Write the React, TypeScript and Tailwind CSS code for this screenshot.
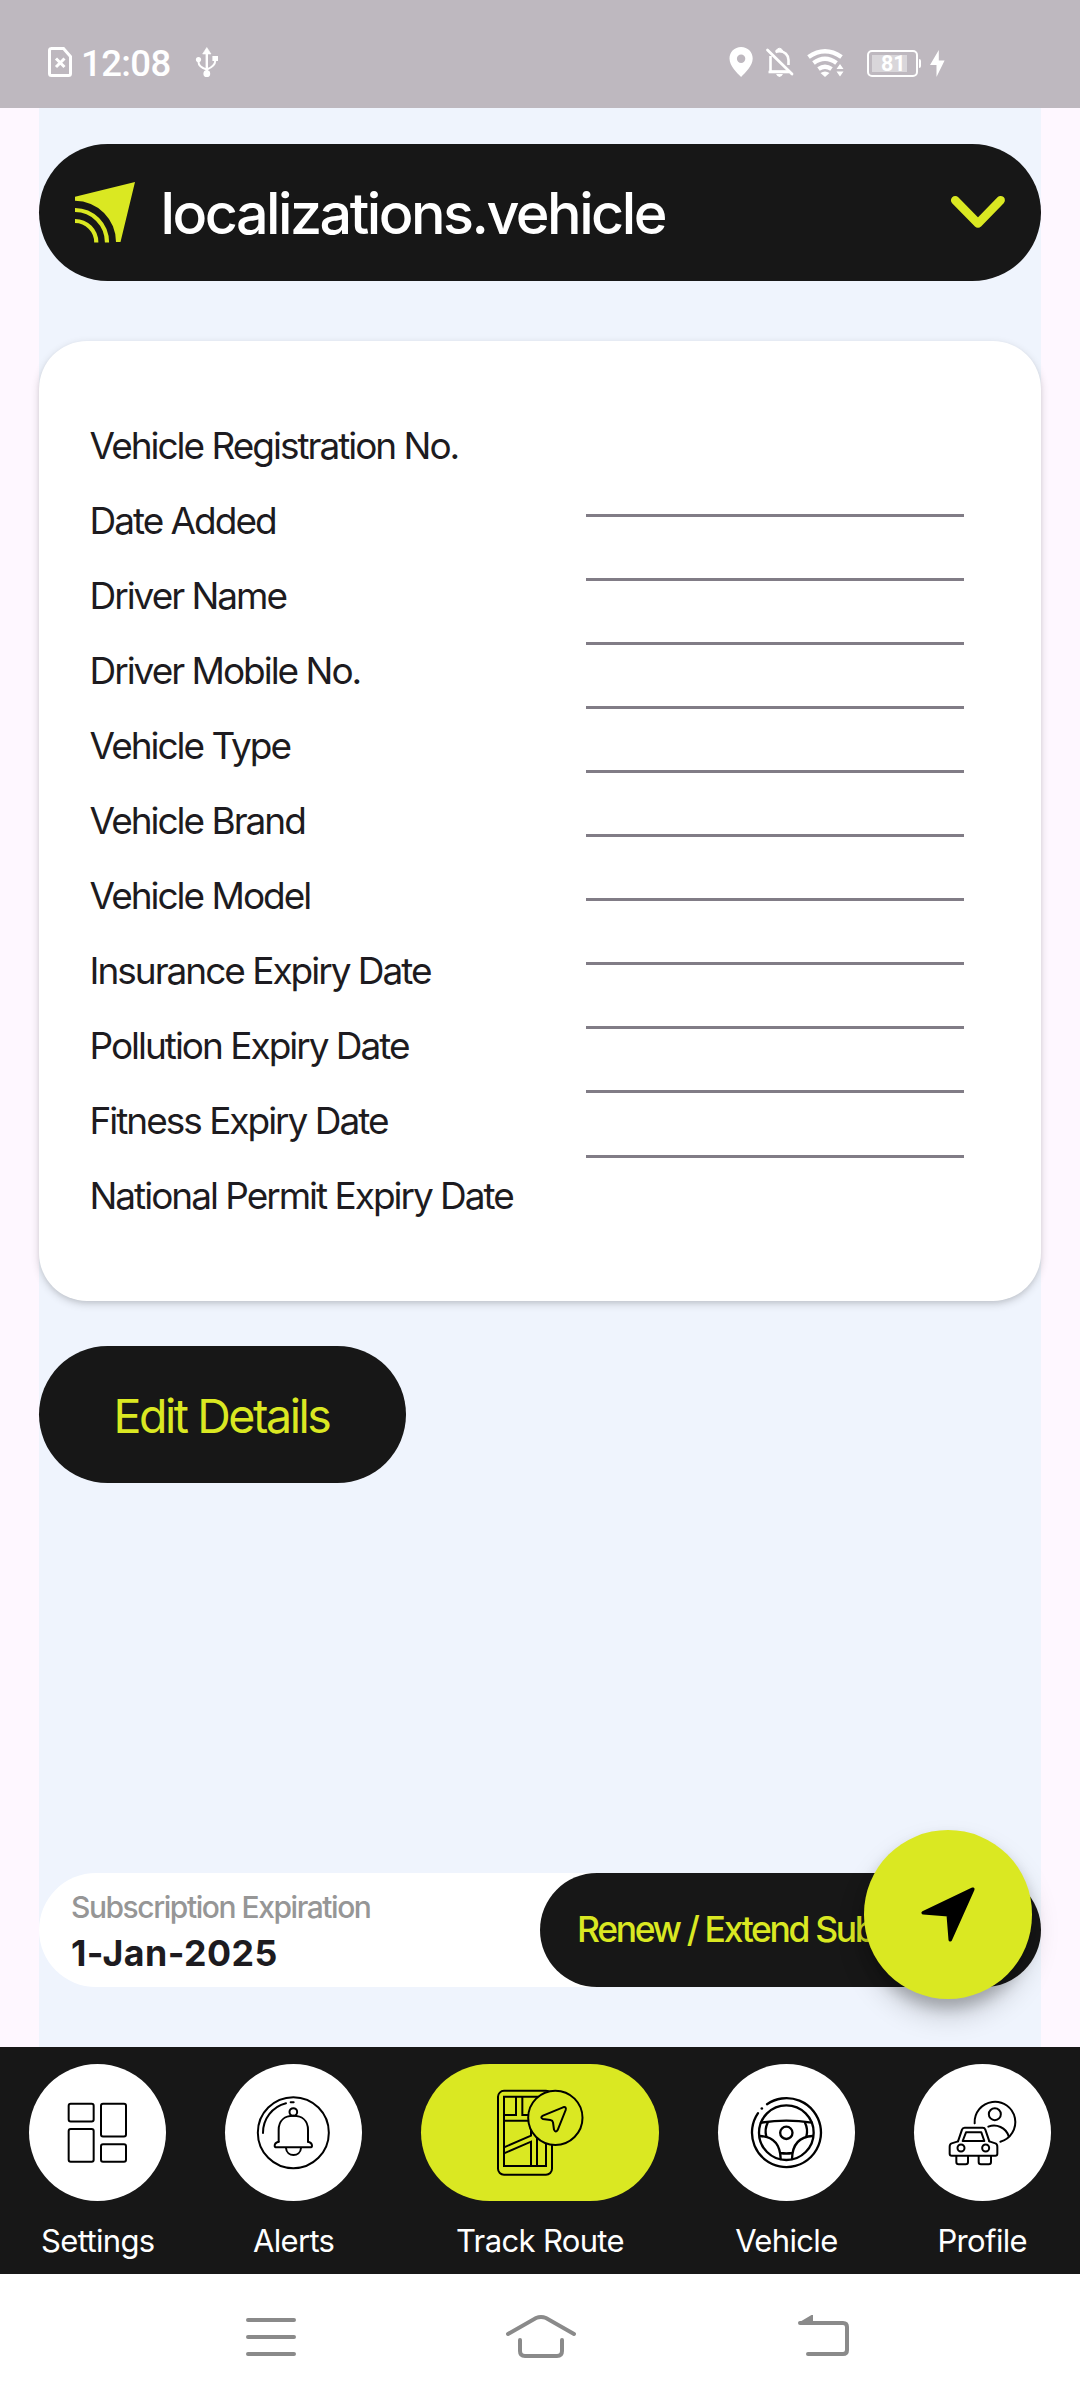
import React from "react";

const FIELDS = [
  "Vehicle Registration No.",
  "Date Added",
  "Driver Name",
  "Driver Mobile No.",
  "Vehicle Type",
  "Vehicle Brand",
  "Vehicle Model",
  "Insurance Expiry Date",
  "Pollution Expiry Date",
  "Fitness Expiry Date",
  "National Permit Expiry Date",
];

function StatusBar() {
  return (
    <header className="flex h-[108px] shrink-0 items-start bg-[#beb8bf] pt-[46px] pl-[47px] text-white">
      <svg className="h-8 w-[26px]" viewBox="47 46 26 32" fill="none" stroke="white">
        <path d="M51 48.5H63.5L70.5 56.5V73.5Q70.5 75.5 68.5 75.5H51.5Q49.5 75.5 49.5 73.5V50.5Q49.5 48.5 51.5 48.5Z" strokeWidth="3" />
        <path d="M56 58.5L64.5 67M64.5 58.5L56 67" strokeWidth="3" />
      </svg>
      <span className="ml-[8px] w-[92px] font-['Roboto'] text-[36.5px] leading-[36px] font-medium tracking-[-0.6px] whitespace-nowrap">12:08</span>
      <svg className="ml-[21px] h-8 w-[26px]" viewBox="194 46 26 32" fill="white" stroke="white">
        <path d="M206.8 52V73" strokeWidth="2.4" fill="none" />
        <path d="M206.8 47.5L211 54H202.600Z" strokeWidth="0.6" />
        <path d="M198.500 60V62Q198.500 67 206.800 69.500Q215.200 66 215.200 61V59" fill="none" strokeWidth="2" />
        <circle cx="198.500" cy="59.500" r="2.600" stroke="none" />
        <path d="M212.400 56H218V61H212.400Z" stroke="none" />
        <circle cx="206.800" cy="73.700" r="3.400" stroke="none" />
      </svg>
      <svg className="ml-[508px] h-8 w-[26px]" viewBox="728 46 26 32">
        <path fill="white" fillRule="evenodd" d="M741.100 47C734.500 47 729.500 52 729.500 58.500C729.500 66 737 73 741.100 77C745 73 752.700 66 752.700 58.500C752.700 52 747.700 47 741.100 47ZM741.100 54.500A4.200 4.200 0 1 1 741.100 62.900A4.200 4.200 0 1 1 741.100 54.500Z" />
      </svg>
      <svg className="ml-[11px] h-8 w-[30px]" viewBox="765 46 30 32" fill="none" stroke="white" strokeWidth="2.6">
        <path d="M767.500 50L792 74" strokeLinecap="round" strokeWidth="2.800" />
        <path d="M770.500 56V71.500H788M788.500 65V60C788.500 55 784.500 51.200 779.500 51.200C777.700 51.200 776.600 51.500 775.500 52" />
        <path d="M768.500 72H789" />
        <path d="M776 50.500Q779.400 46 782.800 50.500Z" fill="white" strokeWidth="1" />
        <path d="M776 74H783Q781.500 77 779.500 77Q777.500 77 776 74Z" fill="white" stroke="none" />
      </svg>
      <svg className="ml-[11px] h-8 w-[40px]" viewBox="806 46 40 32" fill="none" stroke="white" strokeWidth="4.400">
        <path d="M808.500 57Q825 45.500 841.500 57" />
        <path d="M813.500 63Q825 54.500 836.500 63" />
        <path d="M818.500 69Q825 64.500 831.500 69" />
        <path d="M820.500 73Q825 70 829.500 73L825 77Z" fill="white" stroke="none" />
        <path d="M836.500 69L840 64L843.500 69ZM836.500 71.500L840 76.500L843.500 71.500Z" fill="white" stroke="none" />
      </svg>
      <div className="mt-[4px] ml-[21px] flex h-[27px] w-[51px] items-center rounded-[5px] border-2 border-white pl-[3px]">
        <div className="relative h-[17px] w-[35px] bg-[#d9d6da]">
          <span className="absolute -top-[1px] left-[9px] font-['Roboto'] text-[21.500px] leading-[19px] font-bold">81</span>
        </div>
      </div>
      <div className="mt-[13px] ml-px h-[9px] w-[2px] rounded-r-sm bg-white" />
      <svg className="ml-[8px] h-8 w-[17px]" viewBox="929 46 17 32">
        <path fill="white" d="M938.800 50L930 65H936.500V77L944.600 60.500H938.800Z" />
      </svg>
    </header>
  );
}

function VehicleSelect() {
  return (
    <button className="flex h-[136.500px] items-center rounded-full bg-[#171717] text-left">
      <svg className="ml-[36px] h-[61px] w-[60px]" viewBox="75 182 60 61" fill="none" stroke="#dae822" strokeWidth="4.200">
        <path d="M135 182L75 196.800V200.800A41 41 0 0 1 116 242H120.500Z" fill="#dae822" stroke="none" />
        <path d="M75 210A32 32.500 0 0 1 107 242.500" />
        <path d="M75 221A21.300 21.500 0 0 1 96.300 242.500" />
      </svg>
      <span className="ml-[25.500px] flex-1 pt-px text-[57.500px] leading-[72px] font-medium tracking-[-2.520px] text-white">localizations.vehicle</span>
      <svg className="mr-[35px] h-[34px] w-[56px]" viewBox="950 195.300 56 34" fill="none" stroke="#dae822" strokeWidth="8.600" strokeLinecap="round" strokeLinejoin="round">
        <path d="M955.200 200.500L978 223.800L1000.600 200.500" />
      </svg>
    </button>
  );
}

function DetailsCard() {
  return (
    <section className="mt-[60px] flex h-[960.500px] justify-between rounded-[48px] bg-white pr-[77px] pl-[50.500px] shadow-[0_3px_9px_rgba(0,0,0,0.16),0_2px_4px_rgba(0,0,0,0.06)]">
      <div className="flex flex-col pt-[67.500px]">
        {FIELDS.map((f) => (
          <div key={f} className="text-[37px] leading-[75px] tracking-[-2.020px] whitespace-nowrap text-[#1d1b20]">
            {f}
          </div>
        ))}
      </div>
      <div className="flex w-[378px] flex-col pt-[112px]">
        {FIELDS.map((f) => (
          <div key={f} className="h-[64.100px] shrink-0 border-b-[3px] border-[#817c86]" />
        ))}
      </div>
    </section>
  );
}

function SubscriptionBar() {
  return (
    <div className="mt-auto mb-[60px] flex h-[113.500px] rounded-full bg-white">
      <div className="flex-1 pt-[16px] pl-[32px] whitespace-nowrap">
        <div className="text-[30px] leading-[36px] font-medium tracking-[-1.450px] text-[#969696]">Subscription Expiration</div>
        <div className="mt-[6px] text-[35.750px] leading-[44px] font-bold tracking-[0.450px] text-[#1d1b20]">1-Jan-2025</div>
      </div>
      <button className="flex w-[501px] items-center rounded-full bg-[#171717] pl-[37px] text-[35.500px] leading-[44px] font-medium tracking-[-2.360px] whitespace-nowrap text-[#dae822]">
        Renew / Extend Subscription
      </button>
    </div>
  );
}

function SettingsIcon() {
  return (
    <svg className="size-[137px]" viewBox="89 72 411 411" fill="none" stroke="black" strokeWidth="6">
      <rect x="208" y="191.500" width="75" height="53" rx="6" />
      <rect x="305" y="191.500" width="75" height="98" rx="6" />
      <rect x="208" y="267" width="75" height="98" rx="6" />
      <rect x="305" y="312.500" width="75" height="53" rx="6" />
    </svg>
  );
}

function AlertsIcon() {
  return (
    <svg className="size-[137px]" viewBox="676 72 411 411" fill="none" stroke="black" strokeWidth="6" strokeLinecap="round">
      <circle cx="881" cy="278" r="106.500" />
      <path d="M790 279A91 91 0 0 1 859 189.500M873 187H882" />
      <circle cx="881" cy="216" r="11.500" />
      <path d="M837 305V270C837 240 857 227.500 881 227.500S925 240 925 270V305" />
      <path d="M837 305C829 307 825 311 825 317Q825 322 831 322H931Q937 322 937 317C937 311 933 307 925 305" />
      <path d="M859 324C861 352 902 352 904 324" />
    </svg>
  );
}

function RouteIcon() {
  return (
    <svg className="h-[137px] w-[238px]" viewBox="123 72 714 411" fill="none" stroke="black" strokeWidth="6">
      <rect x="354" y="152.500" width="162" height="252" rx="18" />
      <path d="M372 170.500H498V378H372Z" />
      <path d="M408 170V225H372M427 170V225H450M372 242H450M372 322L453 287V270M372 340L453 305V378M471 290V378" />
      <circle cx="526" cy="233.500" r="81.500" fill="#dae822" />
      <path d="M489 227L549 202Q560 199 557 210L533 270Q527 279 522 269L519 247Q518 241 511 240L489 237Q479 233 489 227Z" />
    </svg>
  );
}

function VehicleIcon() {
  return (
    <svg className="size-[137px]" viewBox="114 72 411 411" fill="none" stroke="black" strokeWidth="7" strokeLinecap="round">
      <path d="M261 192.500A103.500 103.500 0 1 1 234 219.500" />
      <circle cx="245.500" cy="205.500" r="4" fill="black" stroke="none" />
      <circle cx="319" cy="278" r="82" />
      <circle cx="319" cy="278.500" r="18.500" />
      <path d="M243 248Q319 236 395 248" />
      <path d="M263 248Q253 268 259 290M375 248Q385 268 379 290" />
      <path d="M240 288C280 290 301 312 302 357M398 288C358 290 337 312 336 357M301 339Q319 342 337 339" />
    </svg>
  );
}

function ProfileIcon() {
  return (
    <svg className="size-[137px]" viewBox="701 72 411 411" fill="none" stroke="black" strokeWidth="6" strokeLinecap="round" strokeLinejoin="round">
      <path d="M883 250A61 61 0 1 1 960 305" />
      <circle cx="943.500" cy="222.500" r="18" />
      <path d="M924 260C948 251 977 262 985 289" />
      <path d="M833 304L845 269Q847 263.500 853 263.500H907Q913 263.500 915 269L927 304" />
      <path d="M857 277H903L912 303H847Z" />
      <path d="M833 304L814 310Q808 312 808 320V341Q808 347 814 347H945Q951 347 951 341V320Q951 312 945 310L927 304" />
      <circle cx="842" cy="324" r="10.500" />
      <circle cx="916" cy="324" r="10.500" />
      <path d="M828 348V366Q828 373 835 373H856Q863 373 863 366V348M895 348V366Q895 373 902 373H925Q932 373 932 366V348" />
    </svg>
  );
}

const TABS = [
  { label: "Settings", icon: <SettingsIcon />, active: false },
  { label: "Alerts", icon: <AlertsIcon />, active: false },
  { label: "Track Route", icon: <RouteIcon />, active: true },
  { label: "Vehicle", icon: <VehicleIcon />, active: false },
  { label: "Profile", icon: <ProfileIcon />, active: false },
];

function TabBar() {
  return (
    <nav className="flex h-[227.500px] shrink-0 justify-between bg-[#171717] px-[29.250px] pt-[17.500px]">
      {TABS.map((t) => (
        <div key={t.label} className="flex flex-col items-center">
          <div className={t.active ? "rounded-full bg-[#dae822]" : "rounded-full bg-white"}>{t.icon}</div>
          <span className="mt-[22px] text-[31px] leading-[36px] tracking-[-0.650px] whitespace-nowrap text-white">{t.label}</span>
        </div>
      ))}
    </nav>
  );
}

function SystemBar() {
  return (
    <footer className="flex h-[126px] shrink-0 items-start bg-white pt-[40px] pl-[245px]">
      <svg className="h-[46px] w-[52px]" viewBox="245 2314 52 46" stroke="#8a8a8a" strokeWidth="4" strokeLinecap="round">
        <path d="M248 2320H294M248 2337H294M248 2354H294" />
      </svg>
      <svg className="ml-[207px] h-[46px] w-[74px]" viewBox="504 2314 74 46" fill="none" stroke="#8a8a8a" strokeWidth="4" strokeLinecap="round">
        <path d="M508 2334L536 2318Q541 2316 546 2318L574 2334" />
        <path d="M520 2340V2351Q520 2356 525 2356H557Q562 2356 562 2351V2340" />
      </svg>
      <svg className="ml-[219px] h-[46px] w-[54px]" viewBox="797 2314 54 46" fill="none" stroke="#8a8a8a" strokeWidth="4" strokeLinecap="round">
        <path d="M800 2323H843Q847 2323 847 2327V2350Q847 2354 843 2354H808" />
        <path d="M798 2323L811.500 2315H813V2323Z" fill="#8a8a8a" stroke="none" />
      </svg>
    </footer>
  );
}

export default function App() {
  return (
    <div className="flex h-[2400px] w-[1080px] flex-col overflow-hidden bg-[#fef7ff] font-['Inter',sans-serif]">
      <StatusBar />
      <main className="relative mx-[39px] flex h-[1938.500px] shrink-0 flex-col bg-[#eff4fd] pt-[36px]">
        <VehicleSelect />
        <DetailsCard />
        <button className="mt-[45px] flex h-[136.500px] w-[367px] shrink-0 items-center rounded-full bg-[#171717] pt-[4px] pl-[74.500px] text-[46.500px] leading-[56px] tracking-[-2.450px] text-[#dae822]">
          Edit Details
        </button>
        <SubscriptionBar />
        <button className="absolute right-[9px] bottom-[48px] size-[168.500px] rounded-full bg-[#dae822] shadow-[0_16px_28px_rgba(0,0,0,0.18),0_9px_14px_rgba(0,0,0,0.2)]">
          <svg className="size-full" viewBox="864 1830.500 168 168">
            <path d="M972.500 1889.500L923 1913L948 1915L950 1940Z" fill="black" stroke="black" strokeWidth="3.500" strokeLinejoin="round" />
          </svg>
        </button>
      </main>
      <TabBar />
      <SystemBar />
    </div>
  );
}
